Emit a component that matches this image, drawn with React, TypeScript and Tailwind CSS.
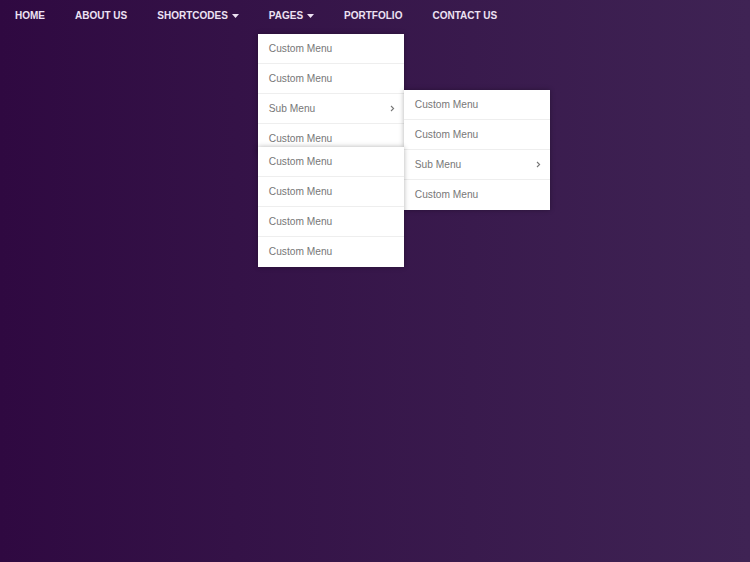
import React from "react";

const Caret = () => (
  <svg width="7" height="4" viewBox="0 0 7 4" className="ml-[4px] mt-[1px]" fill="currentColor">
    <path d="M0 0 L7 0 L3.5 4 Z" />
  </svg>
);

const Chevron = () => (
  <svg width="5" height="7" viewBox="0 0 5 7" fill="none" stroke="#777" strokeWidth="1.1">
    <path d="M1 1 L3.6 3.5 L1 6" />
  </svg>
);

const itemCls =
  "h-[30px] flex items-center justify-between pl-[11px] pr-[9px] text-[10.2px] font-normal text-[#777] border-b border-[#eeeeee] last:border-b-0 bg-white";

const menuCls =
  "w-[146px] bg-white shadow-[0_0_5px_rgba(0,0,0,0.3)] flex flex-col";

function ThirdMenu() {
  return (
    <div className={`absolute right-full -top-[3px] ${menuCls}`}>
      {[0, 1, 2, 3].map((i) => (
        <div key={i} className={itemCls}>Custom Menu</div>
      ))}
    </div>
  );
}

function SubMenu() {
  return (
    <div className={`absolute left-full -top-[4px] ${menuCls}`}>
      <div className={itemCls}>Custom Menu</div>
      <div className={itemCls}>Custom Menu</div>
      <div className={`${itemCls} relative`}>
        <span>Sub Menu</span>
        <Chevron />
        <ThirdMenu />
      </div>
      <div className={itemCls}>Custom Menu</div>
    </div>
  );
}

function PagesMenu() {
  return (
    <div className={`absolute left-[4px] top-[34px] ${menuCls}`}>
      <div className={itemCls}>Custom Menu</div>
      <div className={itemCls}>Custom Menu</div>
      <div className={`${itemCls} relative`}>
        <span>Sub Menu</span>
        <Chevron />
        <SubMenu />
      </div>
      <div className={itemCls}>Custom Menu</div>
    </div>
  );
}

export default function App() {
  const items: { label: string; caret?: boolean; menu?: boolean }[] = [
    { label: "HOME" },
    { label: "ABOUT US" },
    { label: "SHORTCODES", caret: true },
    { label: "PAGES", caret: true, menu: true },
    { label: "PORTFOLIO" },
    { label: "CONTACT US" },
  ];
  return (
    <div
      className="w-[750px] h-[562px] bg-gradient-to-r from-[#2f0941] to-[#3f2354] overflow-hidden"
      style={{ fontFamily: '"Liberation Sans", Arial, sans-serif' }}
    >
      <ul className="flex">
        {items.map((it) => (
          <li
            key={it.label}
            className="relative h-[31px] px-[15px] flex items-center text-[10px] font-bold text-[#ede2f3]"
          >
            <span>{it.label}</span>
            {it.caret && <Caret />}
            {it.menu && <PagesMenu />}
          </li>
        ))}
      </ul>
    </div>
  );
}
